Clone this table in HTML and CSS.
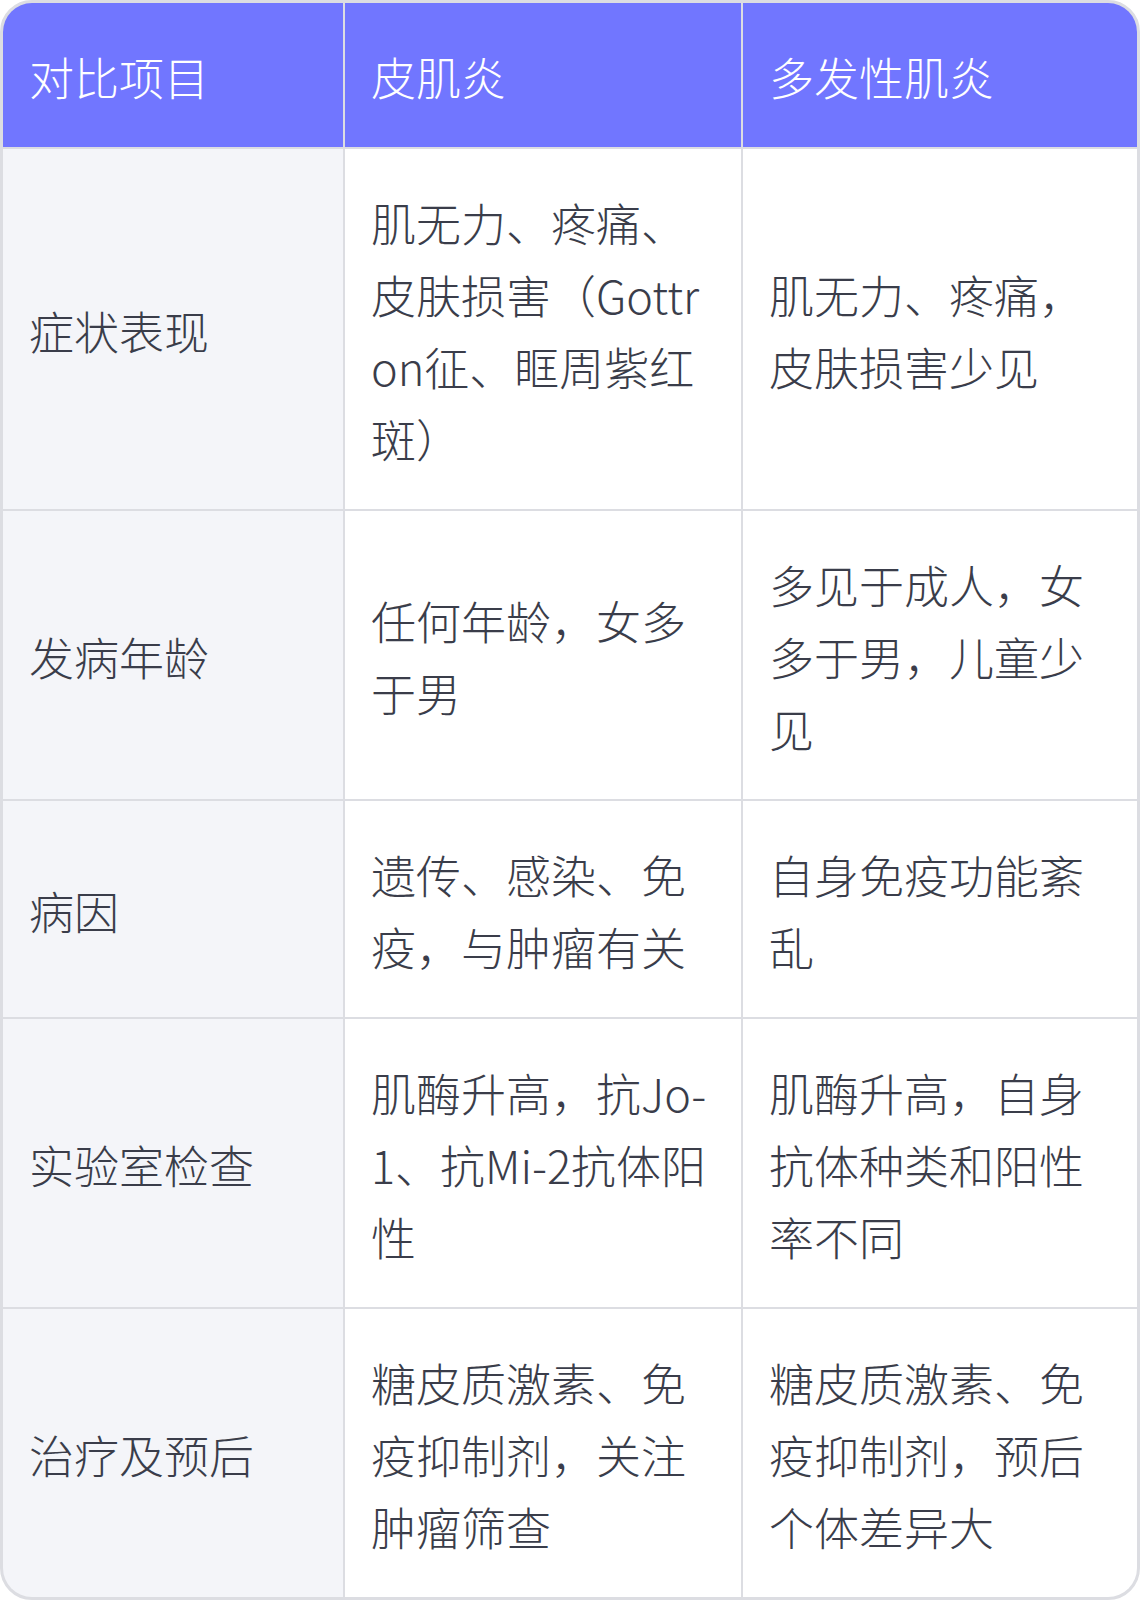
FILE: index.html
```html
<!DOCTYPE html>
<html lang="zh-CN">
<head>
<meta charset="utf-8">
<title>皮肌炎与多发性肌炎对比</title>
<link rel="stylesheet" href="styles.css">
</head>
<body>
<div class="compare">
  <div class="cell head">对比项目</div>
  <div class="cell head">皮肌炎</div>
  <div class="cell head">多发性肌炎</div>

  <div class="cell label">症状表现</div>
  <div class="cell">肌无力、疼痛、皮肤损害（Gottron征、眶周紫红斑）</div>
  <div class="cell">肌无力、疼痛，皮肤损害少见</div>

  <div class="cell label">发病年龄</div>
  <div class="cell">任何年龄，女多于男</div>
  <div class="cell">多见于成人，女多于男，儿童少见</div>

  <div class="cell label">病因</div>
  <div class="cell">遗传、感染、免疫，与肿瘤有关</div>
  <div class="cell">自身免疫功能紊乱</div>

  <div class="cell label">实验室检查</div>
  <div class="cell">肌酶升高，抗Jo-1、抗Mi-2抗体阳性</div>
  <div class="cell">肌酶升高，自身抗体种类和阳性率不同</div>

  <div class="cell label">治疗及预后</div>
  <div class="cell">糖皮质激素、免疫抑制剂，关注肿瘤筛查</div>
  <div class="cell">糖皮质激素、免疫抑制剂，预后个体差异大</div>
</div>
</body>
</html>
```

FILE: styles.css
```css
html, body {
  margin: 0;
  padding: 0;
  background: #ffffff;
}

.compare {
  width: 1140px;
  box-sizing: border-box;
  border: 3px solid #dcdde2;
  border-radius: 32px;
  overflow: hidden;
  display: grid;
  grid-template-columns: 340px 396px 1fr;
  gap: 2px;
  background: #dcdde2;
  font-family: "Noto Sans CJK SC", "Noto Sans", sans-serif;
  font-weight: 300;
  font-size: 45px;
  line-height: 72px;
  color: #3a3d4a;
}

.cell {
  background: #ffffff;
  padding: 38px 26px 34px;
  display: flex;
  align-items: center;
  word-break: break-all;
  overflow-wrap: anywhere;
}

.head {
  background: #7176ff;
  color: #ffffff;
}

.label {
  background: #f4f5f9;
}
```
